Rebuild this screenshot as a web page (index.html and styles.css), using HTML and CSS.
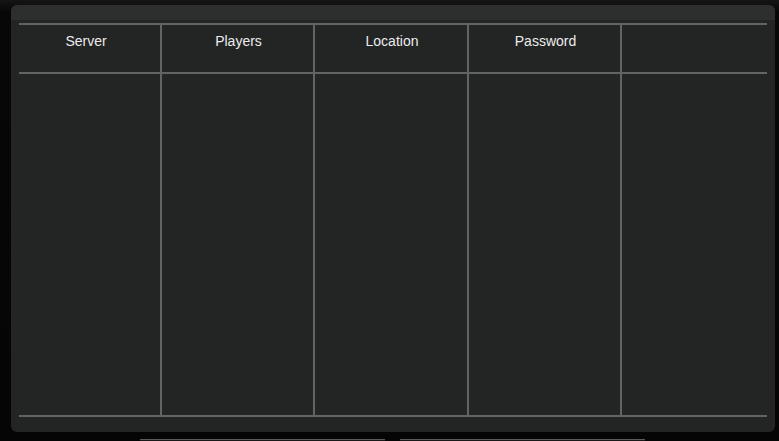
FILE: index.html
```html
<!DOCTYPE html>
<html>
<head>
<meta charset="utf-8">
<link rel="stylesheet" href="styles.css">
</head>
<body>
<div class="screen">
  <div class="panel">
    <div class="panel-top"></div>
    <div class="table">
      <div class="hrule r1"></div>
      <div class="hcell c1">Server</div>
      <div class="hcell c2">Players</div>
      <div class="hcell c3">Location</div>
      <div class="hcell c4">Password</div>
      <div class="hcell c5"></div>
      <div class="hrule r3"></div>
      <div class="hrule r5"></div>
      <div class="vline c2"></div>
      <div class="vline c3"></div>
      <div class="vline c4"></div>
      <div class="vline c5"></div>
    </div>
  </div>
  <div class="buttons">
    <div class="btn"></div>
    <div class="btn"></div>
  </div>
</div>
</body>
</html>
```
FILE: styles.css
```css
html, body {
  margin: 0;
  padding: 0;
  background: #060606;
  overflow: hidden;
}
.screen {
  width: 779px;
  height: 441px;
  background: linear-gradient(180deg, #151515 0px, #070707 12px, #050505 100%);
  padding-top: 5px;
  box-sizing: border-box;
  font-family: "Liberation Sans", Arial, sans-serif;
}
.panel {
  margin-left: 11px;
  width: 764px;
  height: 427px;
  border-radius: 6px;
  background: #232424;
  overflow: hidden;
  display: flex;
  flex-direction: column;
}
.panel-top {
  height: 15px;
  background: #2d2e2e;
  flex: none;
}
.table {
  margin-top: 3px;
  display: grid;
  grid-template-columns: 149px 153px 154px 153px 1fr;
  grid-template-rows: 2px 47px 2px 341px 2px;
}
.hrule {
  grid-column: 1 / -1;
  margin: 0 8px;
  background: #626363;
}
.r1 { grid-row: 1; }
.r3 { grid-row: 3; }
.r5 { grid-row: 5; }
.vline {
  grid-row: 1 / -1;
  width: 2px;
  justify-self: start;
  background: #626363;
}
.c1 { grid-column: 1; }
.c2 { grid-column: 2; }
.c3 { grid-column: 3; }
.c4 { grid-column: 4; }
.c5 { grid-column: 5; }
.hcell {
  grid-row: 2;
  color: #ececec;
  font-size: 14px;
  line-height: 16px;
  text-align: center;
  padding-top: 8px;
  padding-left: 4px;
}
.c1.hcell { padding-left: 1px; }
.buttons {
  display: flex;
  gap: 15px;
  margin-top: 7px;
  padding-left: 140px;
}
.btn {
  width: 245px;
  height: 10px;
  border-top: 1px solid #5a5a5a;
  background: #1a1a1a;
}
```
